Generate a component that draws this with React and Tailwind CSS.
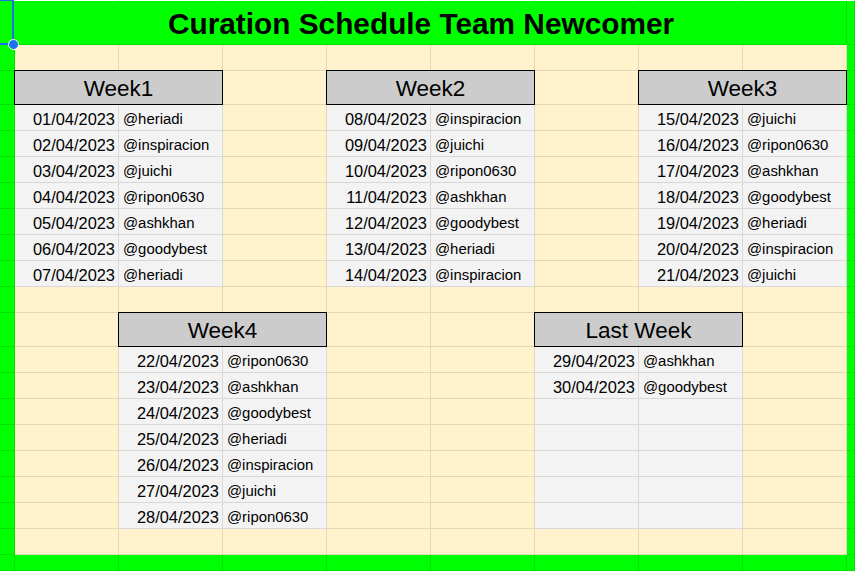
const weeks = [
	{
		title: "Week1",
		col: 2,
		row: 3,
		rows: [
			["01/04/2023", "@heriadi"],
			["02/04/2023", "@inspiracion"],
			["03/04/2023", "@juichi"],
			["04/04/2023", "@ripon0630"],
			["05/04/2023", "@ashkhan"],
			["06/04/2023", "@goodybest"],
			["07/04/2023", "@heriadi"],
		],
	},
	{
		title: "Week2",
		col: 5,
		row: 3,
		rows: [
			["08/04/2023", "@inspiracion"],
			["09/04/2023", "@juichi"],
			["10/04/2023", "@ripon0630"],
			["11/04/2023", "@ashkhan"],
			["12/04/2023", "@goodybest"],
			["13/04/2023", "@heriadi"],
			["14/04/2023", "@inspiracion"],
		],
	},
	{
		title: "Week3",
		col: 8,
		row: 3,
		rows: [
			["15/04/2023", "@juichi"],
			["16/04/2023", "@ripon0630"],
			["17/04/2023", "@ashkhan"],
			["18/04/2023", "@goodybest"],
			["19/04/2023", "@heriadi"],
			["20/04/2023", "@inspiracion"],
			["21/04/2023", "@juichi"],
		],
	},
	{
		title: "Week4",
		col: 3,
		row: 12,
		rows: [
			["22/04/2023", "@ripon0630"],
			["23/04/2023", "@ashkhan"],
			["24/04/2023", "@goodybest"],
			["25/04/2023", "@heriadi"],
			["26/04/2023", "@inspiracion"],
			["27/04/2023", "@juichi"],
			["28/04/2023", "@ripon0630"],
		],
	},
	{
		title: "Last Week",
		col: 7,
		row: 12,
		rows: [
			["29/04/2023", "@ashkhan"],
			["30/04/2023", "@goodybest"],
			["", ""],
			["", ""],
			["", ""],
			["", ""],
			["", ""],
		],
	},
];

const line = "border-r border-b border-black/[0.11]";

// find what sits at a given sheet cell
const lookup = (r, c) => {
	for (const w of weeks) {
		if (r === w.row && c === w.col) return { kind: "head", text: w.title };
		if (r === w.row && c === w.col + 1) return { kind: "skip" };
		const i = r - w.row - 1;
		if (i >= 0 && i < w.rows.length) {
			if (c === w.col) return { kind: "date", text: w.rows[i][0] };
			if (c === w.col + 1) return { kind: "name", text: w.rows[i][1] };
		}
	}
	return null;
};

const Cell = ({ r, c }) => {
	if (r === 0 || r === 22) return <div className="border-r border-black/[0.11] bg-white" />;
	if (r === 21 || c === 1 || c === 10) return <div className={`${line} bg-[#00ff00]`} />;

	const hit = lookup(r, c);
	if (!hit) return <div className={`${line} bg-[#fff2cc]`} />;
	if (hit.kind === "skip") return null;

	if (hit.kind === "head") {
		return (
			<div className="col-span-2 flex items-end justify-center border-r border-b border-black bg-[#cccccc] pb-[4px] text-[22.5px] leading-none text-black shadow-[0_-1px_0_0_#000,-1px_0_0_0_#000,-1px_-1px_0_0_#000]">
				{hit.text}
			</div>
		);
	}
	if (hit.kind === "date") {
		return (
			<div className={`${line} flex items-end justify-end overflow-hidden whitespace-nowrap bg-[#f3f3f3] pr-[3px] pb-[3px] text-[16.4px] leading-none text-black`}>
				{hit.text}
			</div>
		);
	}
	return (
		<div className={`${line} flex items-end overflow-hidden whitespace-nowrap bg-[#f3f3f3] pl-[4px] pb-[3px] text-[14.9px] leading-none text-black`}>
			{hit.text}
		</div>
	);
};

export default function App() {
	const cells = [];
	for (let r = 0; r < 23; r++) {
		if (r === 1) {
			cells.push(
				<div key="title" className={`${line} col-span-9 flex items-end justify-center bg-[#00ff00] pr-[4px] pb-[5px] text-[29.8px] font-bold leading-none text-black`}>
					Curation Schedule Team Newcomer
				</div>
			);
			cells.push(<div key="t10" className={`${line} bg-[#00ff00]`} />);
			continue;
		}
		for (let c = 1; c <= 10; c++) cells.push(<Cell key={`${r}-${c}`} r={r} c={c} />);
	}

	return (
		<div className="relative h-[572px] w-[855px] overflow-hidden bg-white font-['Liberation_Sans',Arial,sans-serif]">
			<div className="grid grid-cols-[15px_repeat(8,104px)_8px] grid-rows-[1px_44px_26px_34px_repeat(7,26px)_26px_34px_repeat(7,26px)_26px_16px_1px]">
				{cells}
			</div>
			{/* selected cell A1 */}
			<div className="absolute left-0 top-0 h-[45px] w-[14px] border-t border-r-2 border-b-2 border-[#1a73e8]" />
			<div className="absolute left-[8px] top-[39px] h-[11px] w-[11px] rounded-full border border-white bg-[#1a73e8]" />
		</div>
	);
}
